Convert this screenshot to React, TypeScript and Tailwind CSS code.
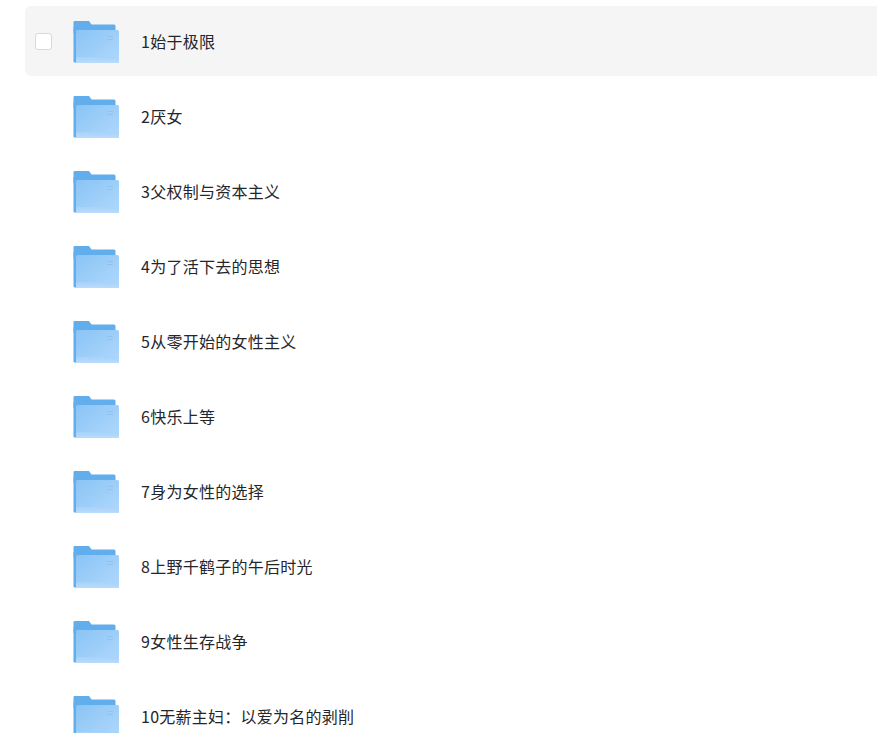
const folders = [
  "1始于极限",
  "2厌女",
  "3父权制与资本主义",
  "4为了活下去的思想",
  "5从零开始的女性主义",
  "6快乐上等",
  "7身为女性的选择",
  "8上野千鹤子的午后时光",
  "9女性生存战争",
  "10无薪主妇：以爱为名的剥削",
];

function FolderIcon({ id }: { id: number }) {
  return (
    <svg width="46" height="42" viewBox="0 0 46 42" className="shrink-0">
      <defs>
        <linearGradient id={`front-${id}`} x1="0" y1="0" x2="1" y2="1">
          <stop offset="0" stopColor="#8ac4f5" />
          <stop offset="1" stopColor="#b0d8fc" />
        </linearGradient>
        <linearGradient id={`band-${id}`} x1="0" y1="0" x2="0" y2="1">
          <stop offset="0" stopColor="#a8d2f9" />
          <stop offset="1" stopColor="#b8dcfc" />
        </linearGradient>
      </defs>
      <path d="M1.5 0H16l2.5 3.5H41a1.5 1.5 0 0 1 1.5 1.5V12H.5V1a1 1 0 0 1 1-1z" fill="#62aeec" />
      <path d="M.5 6H4v35.5H1.5a1 1 0 0 1-1-1z" fill="#62aeec" />
      <rect x="3" y="9" width="43" height="33" rx="1.5" fill={`url(#front-${id})`} />
      <rect x="3" y="36" width="43" height="6" rx="1.5" fill={`url(#band-${id})`} />
      <rect x="34" y="15" width="6" height="1" fill="#92c3ee" />
      <rect x="34" y="18" width="6" height="1" fill="#92c3ee" />
    </svg>
  );
}

export default function App() {
  return (
    <div className="h-[733px] overflow-hidden bg-white pt-[6px] pl-[25px] font-['Noto_Sans_CJK_SC','Noto_Sans',sans-serif] text-[16px] tracking-[0.25px] text-[#25262b]">
      {folders.map((name, i) => (
        <div
          key={name}
          className={`flex h-[70px] mb-[5px] items-center rounded-l-md ${i === 0 ? "bg-[#f5f5f5]" : ""}`}
        >
          <div className="ml-[10px] w-[17px] shrink-0">
            {i === 0 && <div className="h-[17px] w-[17px] rounded-[3px] border border-[#d9d9d9] bg-white" />}
          </div>
          <div className="ml-[21px] mt-[2px] shrink-0">
            <FolderIcon id={i} />
          </div>
          <span className="ml-[22px] leading-none">{name}</span>
        </div>
      ))}
    </div>
  );
}
